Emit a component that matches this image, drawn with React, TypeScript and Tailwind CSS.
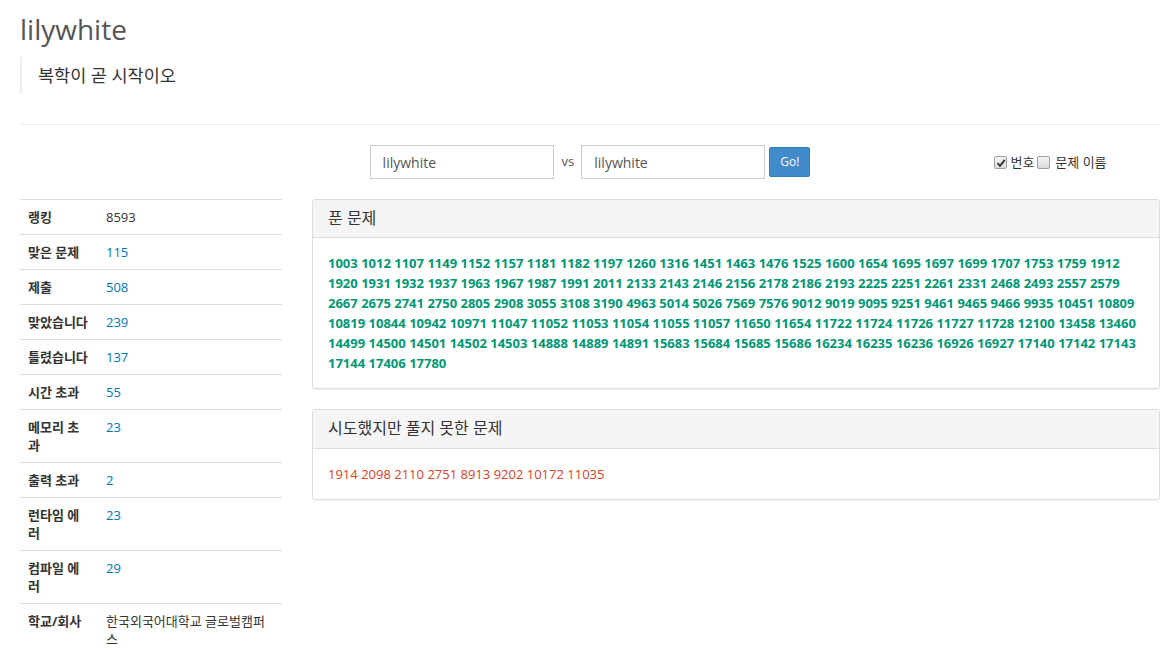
import React from "react";

const solved = [
  1003, 1012, 1107, 1149, 1152, 1157, 1181, 1182, 1197, 1260, 1316, 1451, 1463, 1476, 1525, 1600, 1654, 1695, 1697, 1699,
  1707, 1753, 1759, 1912, 1920, 1931, 1932, 1937, 1963, 1967, 1987, 1991, 2011, 2133, 2143, 2146, 2156, 2178, 2186, 2193,
  2225, 2251, 2261, 2331, 2468, 2493, 2557, 2579, 2667, 2675, 2741, 2750, 2805, 2908, 3055, 3108, 3190, 4963, 5014, 5026,
  7569, 7576, 9012, 9019, 9095, 9251, 9461, 9465, 9466, 9935, 10451, 10809, 10819, 10844, 10942, 10971, 11047, 11052,
  11053, 11054, 11055, 11057, 11650, 11654, 11722, 11724, 11726, 11727, 11728, 12100, 13458, 13460, 14499, 14500, 14501,
  14502, 14503, 14888, 14889, 14891, 15683, 15684, 15685, 15686, 16234, 16235, 16236, 16926, 16927, 17140, 17142, 17143,
  17144, 17406, 17780,
];

const failed = [1914, 2098, 2110, 2751, 8913, 9202, 10172, 11035];

const stats: { label: string; value: string; link?: boolean }[] = [
  { label: "랭킹", value: "8593" },
  { label: "맞은 문제", value: "115", link: true },
  { label: "제출", value: "508", link: true },
  { label: "맞았습니다", value: "239", link: true },
  { label: "틀렸습니다", value: "137", link: true },
  { label: "시간 초과", value: "55", link: true },
  { label: "메모리 초과", value: "23", link: true },
  { label: "출력 초과", value: "2", link: true },
  { label: "런타임 에러", value: "23", link: true },
  { label: "컴파일 에러", value: "29", link: true },
  { label: "학교/회사", value: "한국외국어대학교 글로벌캠퍼스" },
];

function Box({ checked }: { checked?: boolean }) {
  return (
    <span className="inline-flex w-[13px] h-[13px] items-center justify-center rounded-[2px] border border-[#a0a0a0] bg-gradient-to-b from-[#f4f4f4] to-[#dcdcdc] align-middle">
      {checked && (
        <svg width="10" height="10" viewBox="0 0 10 10">
          <path d="M1.5 5.2 L4 7.8 L8.8 1.8" stroke="#333" strokeWidth="1.9" fill="none" />
        </svg>
      )}
    </span>
  );
}

export default function App() {
  return (
    <div className="min-h-[659px] bg-white pl-5 pr-[14px] font-['Open_Sans','Noto_Sans_CJK_KR',sans-serif] text-[13px] text-[#333]">
      <h1 className="pt-[14px] text-[28px] leading-[30.8px] text-[#555]">lilywhite</h1>
      <blockquote className="mt-[12px] border-l-[2px] border-[#eee] pl-4 py-[6px] text-[17.5px] leading-[25px] text-[#333]">
        복학이 곧 시작이오
      </blockquote>
      <hr className="mt-[30px] border-t border-[#eee]" />

      <div className="mt-5 flex items-center">
        <div className="flex-1 basis-0 min-w-0" />
        <div className="flex items-center">
          <input
            readOnly
            value="lilywhite"
            className="h-[34px] w-[184px] border border-[#ccc] px-3 pt-[2px] text-[14px] text-[#555] outline-none"
          />
          <span className="ml-2 mr-[7px] text-[13px] text-[#555]">vs</span>
          <input
            readOnly
            value="lilywhite"
            className="h-[34px] w-[184px] border border-[#ccc] px-3 pt-[2px] text-[14px] text-[#555] outline-none"
          />
          <button className="ml-[4px] h-[30px] rounded-[2px] border border-[#357ebd] bg-[#428bca] px-[10px] text-[12px] text-white">
            Go!
          </button>
        </div>
        <div className="flex-1 basis-0 min-w-0">
          <div className="ml-[184px] flex items-center pt-[2px] text-[13px] gap-[3px] whitespace-nowrap">
            <Box checked />
            <span>번호</span>
            <Box />
            <span className="ml-[2px]">문제 이름</span>
          </div>
        </div>
      </div>

      <div className="mt-5 flex gap-[30px]">
        <table className="w-[262px] table-fixed border-collapse self-start">
          <colgroup>
            <col className="w-[78px]" />
            <col />
          </colgroup>
          <tbody>
            {stats.map((s) => (
              <tr key={s.label} className="border-t border-[#ddd]">
                <th className="p-2 text-left align-top text-[13px] font-bold leading-[18px] text-[#333]">{s.label}</th>
                <td
                  className={
                    "p-2 align-top text-[13px] leading-[18px] " + (s.link ? "text-[#0076c0]" : "text-[#333]")
                  }
                >
                  {s.value}
                </td>
              </tr>
            ))}
          </tbody>
        </table>

        <div className="flex-1 flex flex-col gap-5">
          <div className="rounded-[3px] border border-[#ddd] shadow-[0_1px_1px_rgba(0,0,0,0.05)]">
            <div className="border-b border-[#ddd] bg-[#f5f5f5] px-[15px] py-[10px] text-[16px] leading-[17.6px] text-[#333]">
              푼 문제
            </div>
            <div className="p-[15px] text-[13px] font-bold leading-[20px] text-[#009874]">
              {solved.map((n) => (
                <React.Fragment key={n}>
                  <a className="text-[#009874]">{n}</a>{" "}
                </React.Fragment>
              ))}
            </div>
          </div>

          <div className="rounded-[3px] border border-[#ddd] shadow-[0_1px_1px_rgba(0,0,0,0.05)]">
            <div className="border-b border-[#ddd] bg-[#f5f5f5] px-[15px] py-[10px] text-[16px] leading-[17.6px] text-[#333]">
              시도했지만 풀지 못한 문제
            </div>
            <div className="p-[15px] text-[13px] leading-[20px] text-[#dd4124]">
              {failed.map((n) => (
                <React.Fragment key={n}>
                  <a className="text-[#dd4124]">{n}</a>{" "}
                </React.Fragment>
              ))}
            </div>
          </div>
        </div>
      </div>
    </div>
  );
}
